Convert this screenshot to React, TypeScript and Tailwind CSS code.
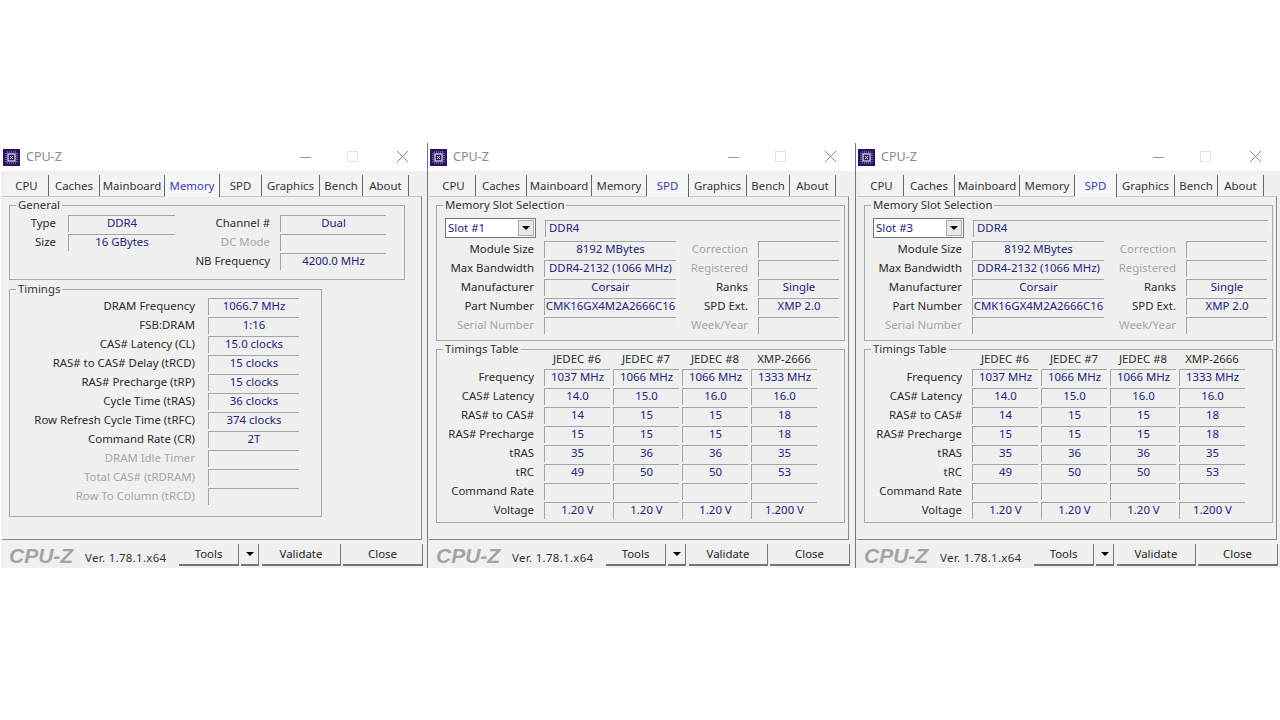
import type { ReactNode } from 'react';

const TABS = [
  { name: 'CPU', width: 'w-[44px]' },
  { name: 'Caches', width: 'w-[51px]' },
  { name: 'Mainboard', width: 'w-[65px]' },
  { name: 'Memory', width: 'w-[55px]' },
  { name: 'SPD', width: 'w-[42px]' },
  { name: 'Graphics', width: 'w-[58px]' },
  { name: 'Bench', width: 'w-[43px]' },
  { name: 'About', width: 'w-[46px]' },
];

function ChipIcon() {
  return (
    <svg width="17" height="17" viewBox="0 0 17 17" className="shrink-0">
      <rect width="17" height="17" fill="#2b1560" />
      <rect x="5" y="5" width="7" height="7" fill="none" stroke="#e8e4f4" strokeWidth="1.2" />
      <path d="M7 7l3 3M10 7l-3 3" stroke="#e8e4f4" strokeWidth="1" />
      <path d="M4 3h9M4 14h9M3 4v9M14 4v9" stroke="#b9b0da" strokeWidth="1" strokeDasharray="1 1" />
    </svg>
  );
}

function TitleBar() {
  return (
    <div className="flex h-[28px] items-center bg-white pl-[2px]">
      <ChipIcon />
      <span className="ml-[6px] text-[12.5px] text-[#8a8a8a]">CPU-Z</span>
      <svg width="115" height="14" viewBox="0 0 115 14" className="ml-auto mr-[12px] shrink-0">
        <path d="M0 7.5h11" stroke="#9a9a9a" strokeWidth="1" />
        <rect x="47.5" y="1.5" width="10" height="10" fill="none" stroke="#e2e2e2" strokeWidth="1" />
        <path d="M97 1l11 11M108 1L97 12" stroke="#8c8c8c" strokeWidth="1" />
      </svg>
    </div>
  );
}

function TabStrip({ active }: { active: string }) {
  return (
    <div className="flex h-[25px] items-end bg-[#f0f0f0] pl-[4px]">
      {TABS.map((tab) => (
        <div
          key={tab.name}
          className={
            tab.name === active
              ? `${tab.width} relative mb-[-1px] flex h-[23px] items-center justify-center border-r border-[#666] bg-[#f6f6f6] text-[#3a3ab4]`
              : `${tab.width} flex h-[21px] items-center justify-center border-r border-[#666] bg-[#f3f3f3] text-[#333]`
          }
        >
          {tab.name}
        </div>
      ))}
    </div>
  );
}

function Group({ title, className, children }: { title: string; className: string; children: ReactNode }) {
  return (
    <div className={`relative border border-[#a8a8a8] ${className}`}>
      <span className="absolute left-[6px] top-[-8px] bg-[#f0f0f0] px-[2px] leading-[14px] text-[#333]">{title}</span>
      {children}
    </div>
  );
}

function Field({ value, className }: { value?: string; className: string }) {
  return (
    <div
      className={`flex h-[17px] shrink-0 items-center justify-center whitespace-nowrap border-l border-t border-[#a4a4a4] border-b-[#f8f8f8] border-r-[#f8f8f8] bg-[#efefef] pb-[2px] text-[#22227a] ${className}`}
    >
      {value}
    </div>
  );
}

function Label({ text, className, muted }: { text: string; className: string; muted?: boolean }) {
  return (
    <div className={`mb-[2px] shrink-0 whitespace-nowrap text-right leading-[15px] ${muted ? 'text-[#a6a6a6]' : 'text-[#2a2a2a]'} ${className}`}>
      {text}
    </div>
  );
}

function Footer() {
  return (
    <div className="flex h-[28px] bg-[#f0f0f0]">
      <span className="ml-[8px] mt-[2px] w-[76px] font-['Liberation_Sans',sans-serif] text-[21px] font-bold italic leading-[27px] text-[#a4a4a4]">
        CPU-Z
      </span>
      <span className="mt-[11px] w-[94px] text-[11.5px] leading-[14px] tracking-[0.3px] text-[#333]">Ver. 1.78.1.x64</span>
      <div className="mt-[4px] flex h-[22px] gap-[2px] text-[#222]">
        <div className="flex w-[60px] items-center justify-center border-b-2 border-r border-[#777] bg-[#f0f0f0]">Tools</div>
        <div className="flex w-[18px] items-center justify-center border-b-2 border-r border-[#777] bg-[#f0f0f0]">
          <div className="h-0 w-0 border-x-[4px] border-t-[4px] border-x-transparent border-t-black" />
        </div>
        <div className="ml-[1px] flex w-[79px] items-center justify-center border-b-2 border-r border-[#777] bg-[#f0f0f0]">Validate</div>
        <div className="flex w-[80px] items-center justify-center border-b-2 border-r border-[#777] bg-[#f0f0f0]">Close</div>
      </div>
    </div>
  );
}

function Window({ className, active, children }: { className: string; active: string; children: ReactNode }) {
  return (
    <div className={`${className} shrink-0 border-l bg-[#f0f0f0]`}>
      <TitleBar />
      <TabStrip active={active} />
      <div className="ml-[1px] h-[344px] w-[420px] border-b border-r border-t border-[#888] border-t-[#c8c8c8] pl-[7px] pt-[8px]">
        {children}
      </div>
      <Footer />
    </div>
  );
}

const TIMINGS = [
  { label: 'DRAM Frequency', value: '1066.7 MHz' },
  { label: 'FSB:DRAM', value: '1:16' },
  { label: 'CAS# Latency (CL)', value: '15.0 clocks' },
  { label: 'RAS# to CAS# Delay (tRCD)', value: '15 clocks' },
  { label: 'RAS# Precharge (tRP)', value: '15 clocks' },
  { label: 'Cycle Time (tRAS)', value: '36 clocks' },
  { label: 'Row Refresh Cycle Time (tRFC)', value: '374 clocks' },
  { label: 'Command Rate (CR)', value: '2T' },
  { label: 'DRAM Idle Timer', muted: true },
  { label: 'Total CAS# (tRDRAM)', muted: true },
  { label: 'Row To Column (tRCD)', muted: true },
];

function MemoryTab() {
  return (
    <div>
      <Group title="General" className="h-[75px] w-[396px] pt-[9px]">
        <div className="flex flex-col gap-[2px]">
          <div className="flex items-center">
            <Label text="Type" className="w-[46px]" />
            <Field value="DDR4" className="ml-[12px] w-[107px]" />
            <Label text="Channel #" className="w-[95px]" />
            <Field value="Dual" className="ml-[10px] w-[106px]" />
          </div>
          <div className="flex items-center">
            <Label text="Size" className="w-[46px]" />
            <Field value="16 GBytes" className="ml-[12px] w-[107px]" />
            <Label text="DC Mode" className="w-[95px]" muted />
            <Field className="ml-[10px] w-[106px]" />
          </div>
          <div className="flex items-center">
            <div className="w-[165px] shrink-0" />
            <Label text="NB Frequency" className="w-[95px]" />
            <Field value="4200.0 MHz" className="ml-[10px] w-[106px]" />
          </div>
        </div>
      </Group>
      <Group title="Timings" className="mt-[9px] h-[228px] w-[313px] pt-[8px]">
        <div className="flex flex-col gap-[2px]">
          {TIMINGS.map((row) => (
            <div key={row.label} className="flex items-center">
              <Label text={row.label} className="w-[185px]" muted={row.muted} />
              <Field value={row.value} className="ml-[13px] w-[91px]" />
            </div>
          ))}
        </div>
      </Group>
    </div>
  );
}

const COLUMNS = ['JEDEC #6', 'JEDEC #7', 'JEDEC #8', 'XMP-2666'];

const TABLE = [
  { label: 'Frequency', values: ['1037 MHz', '1066 MHz', '1066 MHz', '1333 MHz'] },
  { label: 'CAS# Latency', values: ['14.0', '15.0', '16.0', '16.0'] },
  { label: 'RAS# to CAS#', values: ['14', '15', '15', '18'] },
  { label: 'RAS# Precharge', values: ['15', '15', '15', '18'] },
  { label: 'tRAS', values: ['35', '36', '36', '35'] },
  { label: 'tRC', values: ['49', '50', '50', '53'] },
  { label: 'Command Rate', values: ['', '', '', ''] },
  { label: 'Voltage', values: ['1.20 V', '1.20 V', '1.20 V', '1.200 V'] },
];

const SLOT_ROWS = [
  { left: 'Module Size', value: '8192 MBytes', right: 'Correction', extra: '' },
  { left: 'Max Bandwidth', value: 'DDR4-2132 (1066 MHz)', right: 'Registered', extra: '' },
  { left: 'Manufacturer', value: 'Corsair', right: 'Ranks', extra: 'Single' },
  { left: 'Part Number', value: 'CMK16GX4M2A2666C16', right: 'SPD Ext.', extra: 'XMP 2.0' },
  { left: 'Serial Number', value: '', right: 'Week/Year', extra: '' },
];

function SpdTab({ slot }: { slot: string }) {
  return (
    <div>
      <Group title="Memory Slot Selection" className="h-[136px] w-[409px] pt-[12px]">
        <div className="flex items-center">
          <div className="ml-[8px] flex h-[20px] w-[91px] shrink-0 items-center justify-between border border-[#777] bg-white pl-[2px] pr-[1px] text-[#22227a]">
            {slot}
            <div className="flex h-[16px] w-[16px] items-center justify-center border border-[#aaa] bg-[#e8e8e8]">
              <div className="h-0 w-0 border-x-[4px] border-t-[4px] border-x-transparent border-t-black" />
            </div>
          </div>
          <Field value="DDR4" className="ml-[9px] w-[295px] !justify-start pl-[3px]" />
        </div>
        <div className="mt-[3px] flex flex-col gap-[2px]">
          {SLOT_ROWS.map((row) => (
            <div key={row.left} className="flex items-center">
              <Label text={row.left} className="w-[97px]" muted={row.left === 'Serial Number'} />
              <Field value={row.value} className="ml-[10px] w-[132px]" />
              <Label text={row.right} className="w-[72px]" muted={row.extra === ''} />
              <Field value={row.extra} className="ml-[10px] w-[81px]" />
            </div>
          ))}
        </div>
      </Group>
      <Group title="Timings Table" className="mt-[8px] h-[174px] w-[409px]">
        <div className="ml-[107px] flex h-[19px] items-center gap-[3px] pb-[1px] text-[#2a2a2a]">
          {COLUMNS.map((name) => (
            <div key={name} className="w-[66px] text-center">
              {name}
            </div>
          ))}
        </div>
        <div className="flex flex-col gap-[2px]">
          {TABLE.map((row) => (
            <div key={row.label} className="flex items-center">
              <Label text={row.label} className="w-[97px]" />
              <div className="ml-[10px] flex gap-[3px]">
                {row.values.map((value, i) => (
                  <Field key={i} value={value} className="w-[66px]" />
                ))}
              </div>
            </div>
          ))}
        </div>
      </Group>
    </div>
  );
}

export default function App() {
  return (
    <div className="h-[720px] w-[1280px] overflow-hidden bg-white pt-[143px] font-['Noto_Sans',sans-serif] text-[11.4px] leading-[16px]">
      <div className="flex">
        <Window className="w-[427px] border-white" active="Memory">
          <MemoryTab />
        </Window>
        <Window className="w-[428px] border-[#777]" active="SPD">
          <SpdTab slot="Slot #1" />
        </Window>
        <Window className="w-[425px] border-[#777]" active="SPD">
          <SpdTab slot="Slot #3" />
        </Window>
      </div>
    </div>
  );
}
